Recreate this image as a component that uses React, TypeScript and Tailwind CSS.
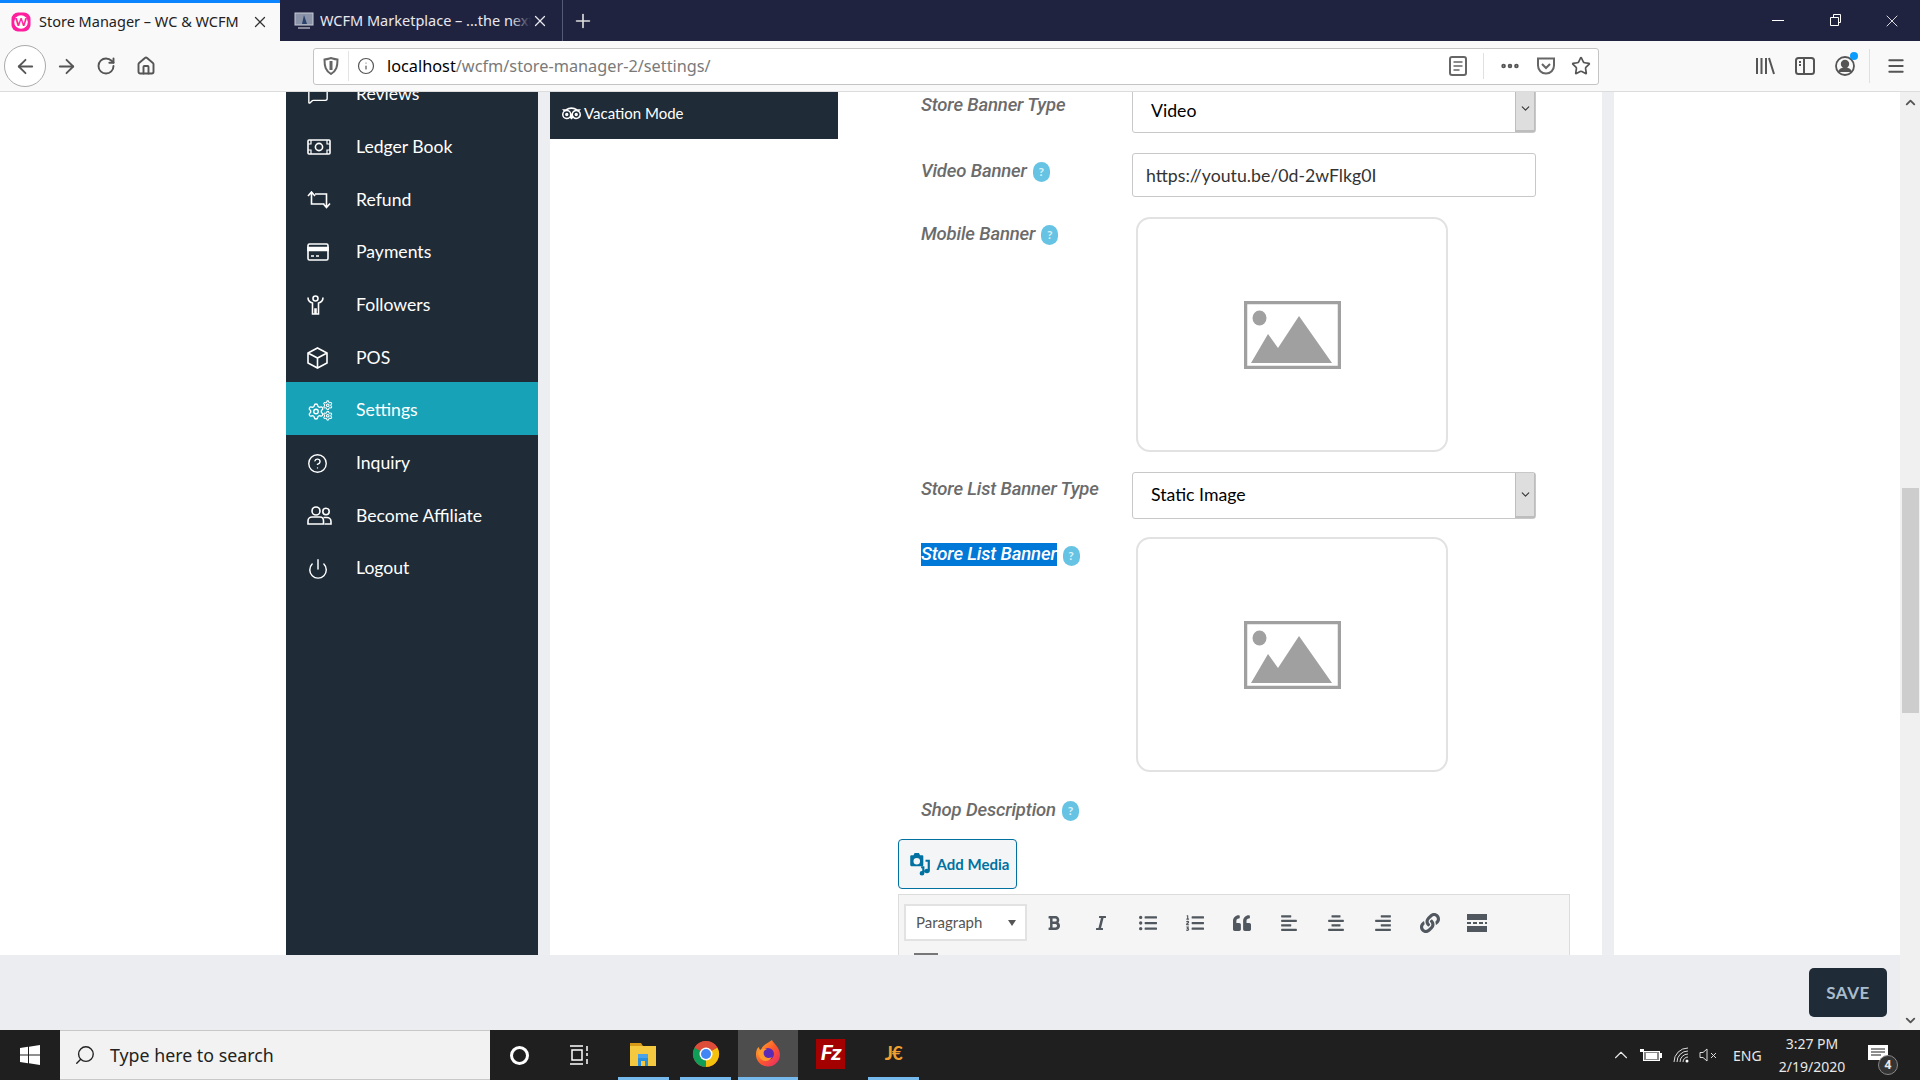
import {
  ArrowLeft,
  ArrowRight,
  ChevronDown,
  ChevronUp,
  CircleHelp,
  Ellipsis,
  Home,
  Info,
  Menu,
  MessageSquare,
  Plus,
  Power,
  RotateCw,
  Search,
  Settings,
  Star,
  X,
} from "lucide-react";
import { ReactNode } from "react";
import {
  FaAlignCenter,
  FaAlignLeft,
  FaAlignRight,
  FaBold,
  FaItalic,
  FaLink,
  FaListOl,
  FaListUl,
  FaQuoteLeft,
  FaTripadvisor,
} from "react-icons/fa";

const stroke = { fill: "none", stroke: "currentColor", strokeWidth: 1.6 };

function MoneyIcon() {
  return (
    <svg width="24" height="16" viewBox="0 0 24 16" {...stroke}>
      <rect x="1" y="1" width="22" height="14" rx="1" />
      <circle cx="12" cy="8" r="3.600" />
      <path d="M1 5h3V1M20 1v4h3M1 11h3v4M20 15v-4h3" strokeWidth="1.200" />
    </svg>
  );
}

function RefundIcon() {
  return (
    <svg width="25" height="18" viewBox="0 0 25 18" {...stroke}>
      <path d="M1 5l3.500-4 3.500 4M4.500 1v12h13M8 3h11.500v13M16 12.500l3.500 4 3.500-4" />
    </svg>
  );
}

function CardIcon() {
  return (
    <svg width="22" height="18" viewBox="0 0 22 18" {...stroke}>
      <rect x="1" y="1" width="20" height="16" rx="1.500" />
      <path d="M1 4.500h20V7.500H1z" fill="currentColor" />
      <path d="M4 13h3M9 13h3" />
    </svg>
  );
}

function FollowerIcon() {
  return (
    <svg width="17" height="20" viewBox="0 0 17 20" {...stroke}>
      <circle cx="8.500" cy="3.500" r="2.500" />
      <path d="M1 2.500c0 3.500 2.500 5 4.500 5.500v11h2.500v-5h1v5h2.500V8c2-.5 4.500-2 4.500-5.500" />
    </svg>
  );
}

function BoxIcon() {
  return (
    <svg width="21" height="22" viewBox="0 0 21 22" {...stroke}>
      <path d="M10.500 1L20 6v10l-9.500 5L1 16V6zM1 6l9.500 5L20 6M10.500 11v10" />
    </svg>
  );
}

function GearsIcon() {
  return (
    <svg width="26" height="21" viewBox="0 0 26 21" color="white">
      <Settings x={0} y={2.500} width={18} height={18} strokeWidth={1.800} />
      <Settings x={15.500} y={0} width={10.500} height={10.500} strokeWidth={2.400} />
      <Settings x={15.500} y={10.500} width={10.500} height={10.500} strokeWidth={2.400} />
    </svg>
  );
}

function UsersIcon() {
  return (
    <svg width="25" height="19" viewBox="0 0 25 19" {...stroke}>
      <circle cx="9" cy="5" r="4" />
      <path d="M1 18v-3c0-2.500 2-4 4-4h8c2 0 3.500 1.500 3.500 4v3z" />
      <circle cx="19" cy="5.500" r="3.200" />
      <path d="M17.500 18H24v-2.500c0-2.500-2-4-4-4h-3.500" />
    </svg>
  );
}

function PlaceholderImage() {
  return (
    <div className="flex h-[235px] w-[312px] items-center justify-center rounded-[14px] border-2 border-[#e2e2e2] bg-white">
      <svg width="97" height="68" viewBox="0 0 97 68">
        <rect x="1.500" y="1.500" width="94" height="65" fill="white" stroke="#a0a0a0" strokeWidth="3.500" />
        <ellipse cx="15.500" cy="17" rx="7" ry="7.500" fill="#a0a0a0" />
        <path d="M7 62l17-29 10 14 21-32 33 47z" fill="#a0a0a0" />
      </svg>
    </div>
  );
}

function HelpBadge() {
  return (
    <span className="ml-[6px] mt-[3px] inline-flex h-[20px] w-[17px] shrink-0 items-center justify-center rounded-full bg-[#67c3e3] text-[12px] font-bold text-[#d9f1f9] [font-family:Lato,sans-serif]">
      ?
    </span>
  );
}

function FieldLabel({ children, help, top }: { children: ReactNode; help?: boolean; top: string }) {
  return (
    <div className={`flex w-[211px] shrink-0 items-start ${top}`}>
      <span className="whitespace-nowrap text-[18.500px] font-medium italic leading-[24px] tracking-[-0.15px] text-[#6b6b6b] [font-family:Roboto,sans-serif]">
        {children}
      </span>
      {help && <HelpBadge />}
    </div>
  );
}

function SelectBox({ value, shift }: { value: string; shift: string }) {
  return (
    <div className="flex h-[47px] w-[404px] items-stretch rounded-[3px] border border-[#c8c8c8] bg-white">
      <span className={`flex flex-1 items-center pl-[18px] text-[17.700px] text-black [font-family:Lato,sans-serif] ${shift}`}>
        {value}
      </span>
      <span className="flex w-[20px] items-center justify-center border-x border-b-2 border-[#bdbdbd] bg-[#dedede] text-[#333]">
        <ChevronDown size={13} />
      </span>
    </div>
  );
}

const navItems = [
  { label: "Reviews", icon: <MessageSquare size={22} strokeWidth={1.5} /> },
  { label: "Ledger Book", icon: <MoneyIcon /> },
  { label: "Refund", icon: <RefundIcon /> },
  { label: "Payments", icon: <CardIcon /> },
  { label: "Followers", icon: <FollowerIcon /> },
  { label: "POS", icon: <BoxIcon /> },
  { label: "Settings", icon: <GearsIcon />, active: true },
  { label: "Inquiry", icon: <CircleHelp size={21} strokeWidth={1.6} /> },
  { label: "Become Affiliate", icon: <UsersIcon /> },
  { label: "Logout", icon: <Power size={22} strokeWidth={1.6} /> },
];

function Sidebar() {
  return (
    <aside className="w-[252px] shrink-0 bg-[#1f2b37] text-white">
      <ul className="-mt-[26px]">
        {navItems.map((item) => (
          <li
            key={item.label}
            className={`flex h-[52.700px] items-center pl-[21px] pt-[4px] text-[17.600px] [font-family:Lato,sans-serif] ${
              item.active ? "bg-[#17a2b8]" : ""
            }`}
          >
            <span className="flex w-[49px] shrink-0 items-center">{item.icon}</span>
            {item.label}
          </li>
        ))}
      </ul>
    </aside>
  );
}

function EditorToolbar() {
  const icons = [
    <FaBold size={16} />,
    <FaItalic size={16} />,
    <FaListUl size={18} />,
    <FaListOl size={18} />,
    <FaQuoteLeft size={18} />,
    <FaAlignLeft size={18} />,
    <FaAlignCenter size={18} />,
    <FaAlignRight size={18} />,
    <FaLink size={20} />,
    <svg width="20" height="18" viewBox="0 0 20 18" fill="currentColor">
      <path d="M0 0h20v6H0zM0 8h4v2H0zM6 8h4v2H6zM12 8h4v2h-4zM18 8h2v2h-2zM0 12h20v6H0z" />
    </svg>,
  ];
  return (
    <div className="mt-[5px] h-[200px] w-[672px] -ml-[23px] border border-[#dcdcdc] bg-[#f5f5f5] pl-[5px] pt-[9px]">
      <div className="flex items-center">
        <div className="flex h-[37px] w-[123px] items-center justify-between border-2 border-[#e2e2e2] bg-white pl-[10px] pr-[9px] text-[15px] text-[#555] [font-family:Lato,sans-serif]">
          Paragraph
          <span className="h-0 w-0 border-x-[4.500px] border-t-[6px] border-x-transparent border-t-[#555]" />
        </div>
        <div className="ml-[3px] flex text-[#50575e]">
          {icons.map((icon, i) => (
            <span key={i} className="flex h-[37px] w-[47px] items-center justify-center">
              {icon}
            </span>
          ))}
        </div>
      </div>
      <div className="ml-[10px] mt-[12px] h-[14px] w-[24px] border-t-2 border-[#777]" />
    </div>
  );
}

function SettingsForm() {
  return (
    <div className="-mt-[6px] flex-1 pl-[83px]">
      <div className="flex">
        <FieldLabel top="pt-[7px]">Store Banner Type</FieldLabel>
        <SelectBox value="Video" shift="pt-[3px]" />
      </div>
      <div className="mt-[20px] flex">
        <FieldLabel top="pt-[6px]" help>
          Video Banner
        </FieldLabel>
        <div className="flex h-[44px] w-[404px] items-center rounded-[3px] border border-[#c8c8c8] bg-white pl-[13px] pt-[2px] text-[17.700px] text-[#333] [font-family:Lato,sans-serif]">
          https://youtu.be/0d-2wFlkg0I
        </div>
      </div>
      <div className="mt-[20px] flex">
        <FieldLabel top="pt-[5px] mr-[4px]" help>
          Mobile Banner
        </FieldLabel>
        <PlaceholderImage />
      </div>
      <div className="mt-[20px] flex">
        <FieldLabel top="pt-[5px]">Store List Banner Type</FieldLabel>
        <SelectBox value="Static Image" shift="pb-[0px]" />
      </div>
      <div className="mt-[18px] flex">
        <div className="mr-[4px] flex w-[211px] shrink-0 items-start pt-[6px]">
          <span className="whitespace-nowrap bg-[#0078d7] text-[18.500px] font-medium italic leading-[23px] tracking-[-0.15px] text-white [font-family:Roboto,sans-serif]">
            Store List Banner
          </span>
          <HelpBadge />
        </div>
        <PlaceholderImage />
      </div>
      <div className="mt-[26px] flex">
        <FieldLabel top="" help>
          Shop Description
        </FieldLabel>
      </div>
      <button className="-ml-[23px] mt-[17px] flex h-[50px] w-[119px] items-center justify-center gap-[6px] rounded-[4px] border border-[#0071a1] bg-[#f3f5f6] pl-[2px] text-[15px] font-bold text-[#0071a1] [font-family:Lato,sans-serif]">
        <svg width="23" height="24" viewBox="0 0 21 22" fill="currentColor">
          <path d="M3 3h2l1-2h4l1 2h2a1 1 0 011 1v8a1 1 0 01-1 1H3a1 1 0 01-1-1V4a1 1 0 011-1zm5 2.500a3 3 0 100 6 3 3 0 000-6z" />
          <path d="M16 7h4v10.500a2.500 2 0 11-2-2V9h-2zM12 13h3v6.500a2.200 2 0 11-2-2V15h-1z" />
        </svg>
        Add Media
      </button>
      <EditorToolbar />
    </div>
  );
}

function PageArea() {
  return (
    <div className="flex min-h-0 flex-1 flex-col">
      <div className="flex min-h-0 flex-1 overflow-hidden bg-white">
        <div className="w-[286px] shrink-0" />
        <Sidebar />
        <div className="w-[12px] shrink-0 bg-[#eceef2]" />
        <main className="flex w-[1052px] shrink-0">
          <div className="h-[47px] w-[288px] shrink-0 bg-[#1f2b37] pl-[12px] pt-[10px] text-white">
            <span className="flex items-center gap-[3px] text-[15px] [font-family:Lato,sans-serif]">
              <FaTripadvisor size={19} />
              Vacation Mode
            </span>
          </div>
          <SettingsForm />
        </main>
        <div className="w-[12px] shrink-0 bg-[#eceef2]" />
      </div>
      <div className="flex h-[75px] shrink-0 items-start justify-end bg-[#ecedf1] pr-[13px] pt-[13px]">
        <button className="h-[49px] w-[78px] rounded-[5px] bg-[#1f2b37] text-[17px] font-bold tracking-[0.5px] text-[#a9bccd] [font-family:Lato,sans-serif]">
          SAVE
        </button>
      </div>
    </div>
  );
}

function Scrollbar() {
  return (
    <div className="flex w-[20px] shrink-0 flex-col items-center bg-[#f0f0f0] text-[#555]">
      <span className="flex h-[20px] items-center">
        <ChevronUp size={15} strokeWidth={3} />
      </span>
      <div className="mt-[376px] h-[225px] w-[17px] bg-[#cdcdcd]" />
      <span className="mt-auto flex h-[20px] items-center">
        <ChevronDown size={15} strokeWidth={3} />
      </span>
    </div>
  );
}

function TabBar() {
  return (
    <div className="flex h-[41px] shrink-0 items-stretch bg-[#202340] text-[14.500px] [font-family:'Noto_Sans',sans-serif]">
      <div className="flex w-[280px] items-center border-t-[3px] border-[#0a84ff] bg-[#f9f9fa] pl-[11px] text-[#222]">
        <svg width="20" height="20" viewBox="0 0 20 20">
          <rect x="0.500" y="0.500" width="19" height="19" rx="6.500" fill="#ff1f9c" />
          <circle cx="10" cy="10" r="6.800" fill="white" />
          <text x="10" y="14" textAnchor="middle" fontSize="11.500" fontWeight="900" fill="#ff1f9c" fontFamily="Lato, sans-serif">
            W
          </text>
        </svg>
        <span className="ml-[8px] w-[212px] truncate">Store Manager – WC & WCFM</span>
        <X size={18} strokeWidth={1.7} className="text-[#333]" />
      </div>
      <div className="flex w-[283px] items-center border-r border-[#555a75] pl-[14px] text-[#e8e8ee]">
        <svg width="20" height="20" viewBox="0 0 20 20">
          <rect x="1" y="2" width="18" height="12" fill="#8a93a8" stroke="#c8ccd6" />
          <path d="M8 13l2-9 3 9z" fill="#28406b" />
          <path d="M4 17h12" stroke="#aab" strokeWidth="1.500" />
        </svg>
        <span className="relative ml-[6px] w-[211px] overflow-hidden whitespace-nowrap">
          WCFM Marketplace – ...the next
          <span className="absolute inset-y-0 right-0 w-[20px] bg-gradient-to-r from-transparent to-[#202340]" />
        </span>
        <X size={18} strokeWidth={1.7} />
      </div>
      <div className="flex w-[40px] items-center justify-center text-[#ddd]">
        <Plus size={22} strokeWidth={1.8} />
      </div>
      <div className="ml-auto flex w-[171px] items-center text-white">
        <span className="flex w-[57px] justify-center">
          <span className="h-px w-[12px] bg-white" />
        </span>
        <svg width="58" height="14" viewBox="0 0 58 14" fill="none" stroke="white">
          <path d="M24.500 3.500h8v8h-8zM27.500 3.500v-3h7v8h-2" />
        </svg>
        <span className="flex w-[56px] justify-center">
          <X size={20} strokeWidth={1} />
        </span>
      </div>
    </div>
  );
}

function ToolBar() {
  return (
    <div className="flex h-[51px] shrink-0 items-center border-b border-[#dcdcdc] bg-[#f9f9fa] text-[#555]">
      <span className="ml-[4px] flex h-[42px] w-[42px] items-center justify-center rounded-full border border-[#aaa] bg-white">
        <ArrowLeft size={23} strokeWidth={1.9} />
      </span>
      <span className="flex w-[40px] justify-center">
        <ArrowRight size={23} strokeWidth={1.9} />
      </span>
      <span className="flex w-[40px] justify-center">
        <RotateCw size={20} strokeWidth={2.300} />
      </span>
      <span className="flex w-[40px] justify-center">
        <Home size={20} strokeWidth={2.300} />
      </span>
      <div className="ml-[147px] flex h-[37px] w-[1286px] items-center rounded-[3px] border border-[#c4c4c4] bg-white">
        <span className="flex w-[35px] justify-center border-r border-[#e4e4e4] py-[6px]">
          <svg width="16" height="18" viewBox="0 0 16 18" fill="none" stroke="#666" strokeWidth="2">
            <path d="M1.500 2.500C5 2 6 1.500 8 1c2 .5 3 1 6.500 1.500 0 7-1 11-6.500 14.500C2.500 13.500 1.500 9.500 1.500 2.500z" />
            <path d="M8 4v9" strokeWidth="3" />
          </svg>
        </span>
        <span className="flex w-[34px] justify-center">
          <Info size={18} strokeWidth={1.6} />
        </span>
        <span className="ml-[4px] flex-1 text-[16.300px] text-[#7a7a7a] [font-family:'Noto_Sans',sans-serif]">
          <span className="text-black">localhost</span>/wcfm/store-manager-2/settings/
        </span>
        <svg className="mr-[16px]" width="18" height="20" viewBox="0 0 18 20" fill="none" stroke="#666" strokeWidth="2">
          <rect x="1" y="1" width="16" height="18" rx="2" />
          <path d="M4.500 6h9M4.500 10h9M4.500 14h6" strokeWidth="1.500" />
        </svg>
        <span className="h-[26px] w-px bg-[#e0e0e0]" />
        <span className="flex w-[52px] justify-center">
          <Ellipsis size={22} strokeWidth={3} />
        </span>
        <svg width="20" height="20" viewBox="0 0 20 20" fill="none" stroke="#666" strokeWidth="2">
          <path d="M2 2.500h16v7c0 4.500-3.500 8-8 8s-8-3.500-8-8z" />
          <path d="M6 8l4 4 4-4" />
        </svg>
        <span className="ml-[7px] flex w-[35px] justify-center">
          <Star size={20} strokeWidth={2} />
        </span>
      </div>
      <svg className="ml-[156px]" width="20" height="20" viewBox="0 0 20 20" fill="none" stroke="#555" strokeWidth="2">
        <path d="M2 2v16M6.500 2v16M11 2v16M14 2l5 16" />
      </svg>
      <svg className="ml-[20px]" width="20" height="18" viewBox="0 0 20 18" fill="none" stroke="#555" strokeWidth="2">
        <rect x="1" y="1" width="18" height="16" rx="2.500" />
        <path d="M9 1v16M4 5h2M4 8h2" />
      </svg>
      <span className="relative ml-[20px]">
        <svg width="20" height="20" viewBox="0 0 20 20" fill="none" stroke="#555" strokeWidth="1.800">
          <circle cx="10" cy="10" r="9" />
          <circle cx="10" cy="8" r="3.300" fill="#555" />
          <path d="M4 16c1-3 3-3.500 6-3.500s5 .5 6 3.500" fill="#555" />
        </svg>
        <span className="absolute -right-[3px] -top-[4px] h-[8px] w-[8px] rounded-full bg-[#0a9dff]" />
      </span>
      <span className="ml-[14px] h-[34px] w-px bg-[#e0e0e0]" />
      <span className="ml-[16px]">
        <Menu size={20} strokeWidth={2.400} />
      </span>
    </div>
  );
}

function TaskIcon({ children, underline, active }: { children: ReactNode; underline?: boolean; active?: boolean }) {
  return (
    <span className="flex h-[50px] w-[62.500px] justify-center">
      <span
        className={`flex h-full items-center justify-center border-b-[3px] ${
          underline ? "border-[#76b9ed]" : "border-transparent"
        } ${active ? "w-[60px] bg-[#4d4d4d]" : "w-[51px]"}`}
      >
        {children}
      </span>
    </span>
  );
}

function Taskbar() {
  return (
    <footer className="flex h-[50px] shrink-0 items-stretch bg-[#1f1f1f] text-white [font-family:'Noto_Sans',sans-serif]">
      <span className="flex w-[60px] items-center justify-center">
        <svg width="20" height="20" viewBox="0 0 20 20" fill="white">
          <path d="M0 3l8-1.200v7.700H0zM9 1.700L20 0v9.500H9zM0 10.500h8v7.700L0 17zM9 10.500h11V20L9 18.300z" />
        </svg>
      </span>
      <div className="flex w-[430px] items-center border-y border-[#c8c8c8] bg-[#f2f2f2] pl-[14px] text-[17.800px] text-[#222]">
        <Search size={22} strokeWidth={1.500} className="-scale-x-100" />
        <span className="ml-[14px]">Type here to search</span>
      </div>
      <span className="flex w-[59px] items-center justify-center">
        <span className="h-[19px] w-[19px] rounded-full border-[3px] border-white" />
      </span>
      <span className="mr-[2px] flex w-[61px] items-center justify-center">
        <svg width="22" height="20" viewBox="0 0 22 20" fill="none" stroke="white" strokeWidth="1.500">
          <path d="M1 1h13M1 19h13M3 5h10v10H3zM18 1v5M18 8v3M18 14v5" />
        </svg>
      </span>
      <TaskIcon underline>
        <svg width="28" height="28" viewBox="0 0 28 28">
          <path d="M1 3h11l2 3H1z" fill="#d69a18" />
          <rect x="1" y="6" width="26" height="20" fill="#f5c93f" />
          <path d="M9 26v-8h10v8h-3v-5h-4v5z" fill="#2a8fdc" />
          <rect x="9" y="14" width="10" height="4" fill="#4aa3e8" />
        </svg>
      </TaskIcon>
      <TaskIcon underline>
        <svg width="28" height="28" viewBox="0 0 28 28">
          <circle cx="14" cy="14" r="13" fill="#dd4b39" />
          <path d="M14 14L2.700 7.500A13 13 0 0014 27z" fill="#0f9d58" />
          <path d="M14 14v13A13 13 0 0025.300 7.500z" fill="#f4c20d" />
          <path d="M14 14L25.300 7.500A13 13 0 002.700 7.500z" fill="#dd4b39" />
          <circle cx="14" cy="14" r="6.500" fill="white" />
          <circle cx="14" cy="14" r="5" fill="#4285f4" />
        </svg>
      </TaskIcon>
      <TaskIcon underline active>
        <svg width="30" height="30" viewBox="0 0 30 30">
          <defs>
            <linearGradient id="fx" x1="0" y1="0" x2="1" y2="1">
              <stop offset="0" stopColor="#ffbd2e" />
              <stop offset="0.5" stopColor="#ff5a2b" />
              <stop offset="1" stopColor="#e5266f" />
            </linearGradient>
          </defs>
          <path d="M19 1c1 3 8 7 8 15a12 12 0 11-24-1c0-3 1-6 3-7 0 2 1 3 2 3 1-4 5-6 11-10z" fill="url(#fx)" />
          <circle cx="15" cy="15" r="6" fill="#5b2bb5" />
          <path d="M5 13c2-3 6-4 9-3-3 1-4 3-3 6 1 3 5 4 8 2-2 4-7 5-10 3-3-2-4-5-4-8z" fill="#ff9a2e" />
        </svg>
      </TaskIcon>
      <TaskIcon>
        <span className="flex h-[30px] w-[29px] items-center justify-center bg-[#a30000] text-[21px] font-bold italic tracking-[-1px] text-white [font-family:Roboto,sans-serif]">
          Fz
        </span>
      </TaskIcon>
      <TaskIcon underline>
        <span className="text-[19px] font-bold tracking-[-1px] text-[#f0a030] [font-family:Lato,sans-serif]">J€</span>
      </TaskIcon>
      <div className="ml-auto flex items-center text-[#e8e8e8]">
        <ChevronUp size={22} strokeWidth={1.200} className="mr-[8px]" />
        <svg width="22" height="14" viewBox="0 0 22 14" className="mr-[11px]">
          <rect x="3.500" y="3.500" width="16" height="9" fill="#888" stroke="white" />
          <rect x="6" y="5" width="11" height="6" fill="white" />
          <rect x="20" y="5" width="2" height="5" fill="white" />
          <path d="M0 1h4v3H0z" fill="white" />
        </svg>
        <svg width="16" height="16" viewBox="0 0 16 16" fill="none" stroke="#ddd" className="mr-[10px]">
          <path d="M1 15A14 14 0 0115 1M4 15A11 11 0 0115 4M7 15a8 8 0 018-8M10 15a5 5 0 015-5" />
          <circle cx="14" cy="14" r="1.500" fill="white" stroke="none" />
        </svg>
        <svg width="19" height="14" viewBox="0 0 19 14" fill="none" stroke="#ddd" className="mr-[15px]">
          <path d="M1 4.500h3L8 1v12L4 9.500H1zM12 5l5 5M17 5l-5 5" />
        </svg>
        <span className="w-[37px] text-[14px]">ENG</span>
        <div className="flex w-[84px] flex-col items-center text-[14px] leading-[23px]">
          <span>3:27 PM</span>
          <span>2/19/2020</span>
        </div>
        <span className="relative ml-[14px] mr-[32px] h-[20px] w-[20px]">
          <svg width="20" height="19" viewBox="0 0 20 19" fill="white">
            <path d="M0 0h20v15H0z" />
            <path d="M3 4h14M3 7h14M3 10h10" stroke="#1f1f1f" strokeWidth="1" />
          </svg>
          <span className="absolute -bottom-[10px] -right-[10px] flex h-[20px] w-[20px] items-center justify-center rounded-full border border-[#888] bg-[#333] text-[12px] font-bold">
            4
          </span>
        </span>
      </div>
    </footer>
  );
}

export default function App() {
  return (
    <div className="flex h-screen w-[1920px] flex-col overflow-hidden">
      <TabBar />
      <ToolBar />
      <div className="flex min-h-0 flex-1">
        <PageArea />
        <Scrollbar />
      </div>
      <Taskbar />
    </div>
  );
}
